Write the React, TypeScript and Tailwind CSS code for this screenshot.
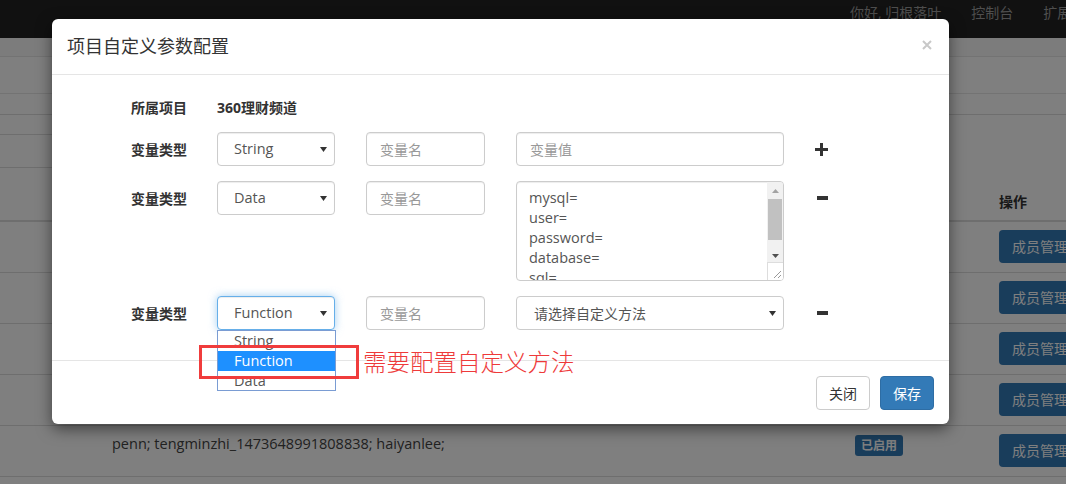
import React from "react";

const caretPath = "M0 0h7L3.5 5z";

function Caret() {
    return (
        <svg width="7" height="5" viewBox="0 0 7 5" className="shrink-0">
            <path d={caretPath} fill="#333" />
        </svg>
    );
}

function SelectBox({ value, focused, width }: { value: string; focused?: boolean; width: string }) {
    return (
        <div
            className={`${width} h-[34px] flex items-center justify-between pl-[16px] pr-[7px] rounded-[4px] border bg-white text-[14.5px] text-[#555] ${
                focused
                    ? "border-[#66afe9] shadow-[inset_0_1px_1px_rgba(0,0,0,0.075),0_0_8px_rgba(102,175,233,0.6)]"
                    : "border-[#ccc] shadow-[inset_0_1px_1px_rgba(0,0,0,0.075)]"
            }`}
        >
            <span>{value}</span>
            <Caret />
        </div>
    );
}

function TextInput({ placeholder, width }: { placeholder: string; width: string }) {
    return (
        <div className={`${width} h-[34px] flex items-center px-[13px] rounded-[4px] border border-[#ccc] bg-white text-[14px] text-[#999] shadow-[inset_0_1px_1px_rgba(0,0,0,0.075)]`}>
            {placeholder}
        </div>
    );
}

function Plus() {
    return (
        <svg width="13" height="13" viewBox="0 0 13 13">
            <path d="M5 0h3v5h5v3H8v5H5V8H0V5h5z" fill="#333" />
        </svg>
    );
}

function Minus() {
    return (
        <svg width="11" height="4" viewBox="0 0 11 4">
            <rect width="11" height="4" fill="#333" />
        </svg>
    );
}

function Label({ children }: { children: React.ReactNode }) {
    return <div className="w-[86px] shrink-0 h-[34px] flex items-center text-[14px] font-bold text-[#333]">{children}</div>;
}

const tableRows = [
    { text: "", badge: false },
    { text: "", badge: false },
    { text: "", badge: false },
    { text: "", badge: false },
    { text: "penn; tengminzhi_1473648991808838; haiyanlee;", badge: true },
];

export default function App() {
    return (
        <div className="relative w-[1066px] h-[484px] overflow-hidden bg-white font-['Open_Sans','Noto_Sans_CJK_SC',sans-serif]">
            {/* page under the modal */}
            <div className="h-[38px] bg-[#222] flex pl-[850px] gap-[30px] pt-[3px] text-[14px] leading-[20px] text-[#9d9d9d] whitespace-nowrap">
                <span className="shrink-0">你好, 归根落叶</span>
                <span className="shrink-0">控制台</span>
                <span className="shrink-0">扩展</span>
            </div>
            <div className="h-[19px] bg-[#f8f8f8] border-b border-[#e7e7e7]" />
            <div className="h-[37px] border-b border-[#e7e7e7]" />
            <div className="h-[21px] border-b border-[#ddd]" />
            <div className="h-[20px] w-[520px] border-b border-[#ddd]" />
            <div className="h-[33px] w-[520px] border-b border-[#ddd]" />
            <div className="h-[54px] flex items-end pb-[8px] border-b-2 border-[#ddd] text-[14px] leading-[20px]">
                <div className="w-[999px] shrink-0" />
                <span className="font-bold text-[#333] whitespace-nowrap">操作</span>
            </div>
            {tableRows.map((row, i) => (
                <div key={i} className="h-[51px] flex border-b border-[#ddd] text-[14.5px] leading-[20px] text-[#444] whitespace-nowrap">
                    <div className="w-[847px] shrink-0 pl-[112px] pt-[8px]">{row.text}</div>
                    <div className="w-[152px] shrink-0 pt-[9px] pl-[8px]">
                        {row.badge && (
                            <span className="inline-block px-[6px] h-[21px] leading-[21px] rounded-[3px] bg-[#337ab7] text-white text-[12px] font-bold">已启用</span>
                        )}
                    </div>
                    <div className="pt-[8px] shrink-0">
                        <div className="h-[33px] w-[100px] flex items-center pl-[13px] rounded-[4px] bg-[#337ab7] text-white text-[14px]">成员管理</div>
                    </div>
                </div>
            ))}

            {/* backdrop */}
            <div className="absolute inset-0 bg-black/50" />

            {/* modal */}
            <div className="absolute left-[52px] top-[19px] w-[897px] rounded-[6px] bg-white shadow-[0_5px_15px_rgba(0,0,0,0.5)]">
                <div className="h-[56px] flex items-center justify-between pl-[15px] pr-[17px] border-b border-[#e5e5e5]">
                    <span className="text-[18px] text-[#333]">项目自定义参数配置</span>
                    <svg width="10" height="10" viewBox="0 0 10 10" className="mt-[-4px]">
                        <path d="M1 1l8 8M9 1l-8 8" stroke="#c8c8c8" strokeWidth="2" />
                    </svg>
                </div>

                <div className="relative h-[285px] pl-[79px] pt-[15px]">
                    <div className="flex">
                        <Label>所属项目</Label>
                        <div className="h-[34px] flex items-center text-[14px] font-bold text-[#333]">360理财频道</div>
                    </div>

                    <div className="flex mt-[8px]">
                        <Label>变量类型</Label>
                        <SelectBox value="String" width="w-[118px]" />
                        <div className="ml-[31px]"><TextInput placeholder="变量名" width="w-[119px]" /></div>
                        <div className="ml-[31px]"><TextInput placeholder="变量值" width="w-[268px]" /></div>
                        <div className="ml-[31px] h-[34px] flex items-center"><Plus /></div>
                    </div>

                    <div className="flex mt-[15px]">
                        <Label>变量类型</Label>
                        <SelectBox value="Data" width="w-[118px]" />
                        <div className="ml-[31px]"><TextInput placeholder="变量名" width="w-[119px]" /></div>
                        <div className="ml-[31px] relative w-[268px] h-[100px] rounded-[4px] border border-[#ccc] overflow-hidden shadow-[inset_0_1px_1px_rgba(0,0,0,0.075)]">
                            <div className="pl-[12px] pt-[6px] text-[14.5px] leading-[20px] text-[#555]">
                                <div>mysql=</div>
                                <div>user=</div>
                                <div>password=</div>
                                <div>database=</div>
                                <div>sql=</div>
                            </div>
                            <div className="absolute right-0 top-0 bottom-0 w-[16px] flex flex-col bg-[#f1f1f1]">
                                <div className="h-[17px] flex items-center justify-center">
                                    <svg width="7" height="4" viewBox="0 0 7 4"><path d="M0 4h7L3.5 0z" fill="#a3a3a3" /></svg>
                                </div>
                                <div className="mx-[1px] h-[41px] bg-[#c1c1c1]" />
                                <div className="h-[22px] flex items-end justify-center pb-[4px]">
                                    <svg width="7" height="4" viewBox="0 0 7 4"><path d="M0 0h7L3.5 4z" fill="#505050" /></svg>
                                </div>
                                <div className="flex-1 bg-white border-t border-l border-[#ddd] flex items-end justify-end p-[2px]">
                                    <svg width="8" height="8" viewBox="0 0 8 8"><path d="M8 1L1 8M8 5L5 8" stroke="#999" strokeWidth="1" /></svg>
                                </div>
                            </div>
                        </div>
                        <div className="ml-[33px] h-[34px] flex items-center"><Minus /></div>
                    </div>

                    <div className="flex mt-[15px]">
                        <Label>变量类型</Label>
                        <div className="relative z-10">
                            <SelectBox value="Function" focused width="w-[118px]" />
                            <div className="absolute left-0 top-full w-[119px] border border-[#7a9cd3] bg-white text-[14.5px] leading-[20px] text-[#555]">
                                <div className="pl-[16px] h-[20px]">String</div>
                                <div className="pl-[16px] h-[20px] bg-[#1e90ff] text-white">Function</div>
                                <div className="pl-[16px] h-[19px] overflow-hidden">Data</div>
                            </div>
                        </div>
                        <div className="ml-[31px]"><TextInput placeholder="变量名" width="w-[119px]" /></div>
                        <div className="ml-[31px] w-[268px] h-[34px] flex items-center justify-between pl-[17px] pr-[7px] rounded-[4px] border border-[#ccc] text-[14px] text-[#555]">
                            <span>请选择自定义方法</span>
                            <Caret />
                        </div>
                        <div className="ml-[33px] h-[34px] flex items-center"><Minus /></div>
                    </div>
                </div>

                <div className="h-[64px] flex justify-end gap-[10px] pt-[15px] px-[15px] border-t border-[#e5e5e5]">
                    <button className="h-[34px] px-[12px] rounded-[4px] border border-[#ccc] bg-white text-[14px] text-[#333]">关闭</button>
                    <button className="h-[34px] px-[12px] rounded-[4px] border border-[#2e6da4] bg-[#337ab7] text-[14px] text-white">保存</button>
                </div>

                {/* annotation */}
                <div className="absolute left-[147px] top-[326px] w-[160px] h-[34px] border-[3px] border-[#f03c3c] z-20" />
                <div className="absolute left-[311px] top-[326px] h-[34px] flex items-center text-[23.5px] font-light text-[#ee3a3a] font-['Noto_Sans_CJK_SC',sans-serif] z-20 whitespace-nowrap">
                    需要配置自定义方法
                </div>
            </div>
        </div>
    );
}
